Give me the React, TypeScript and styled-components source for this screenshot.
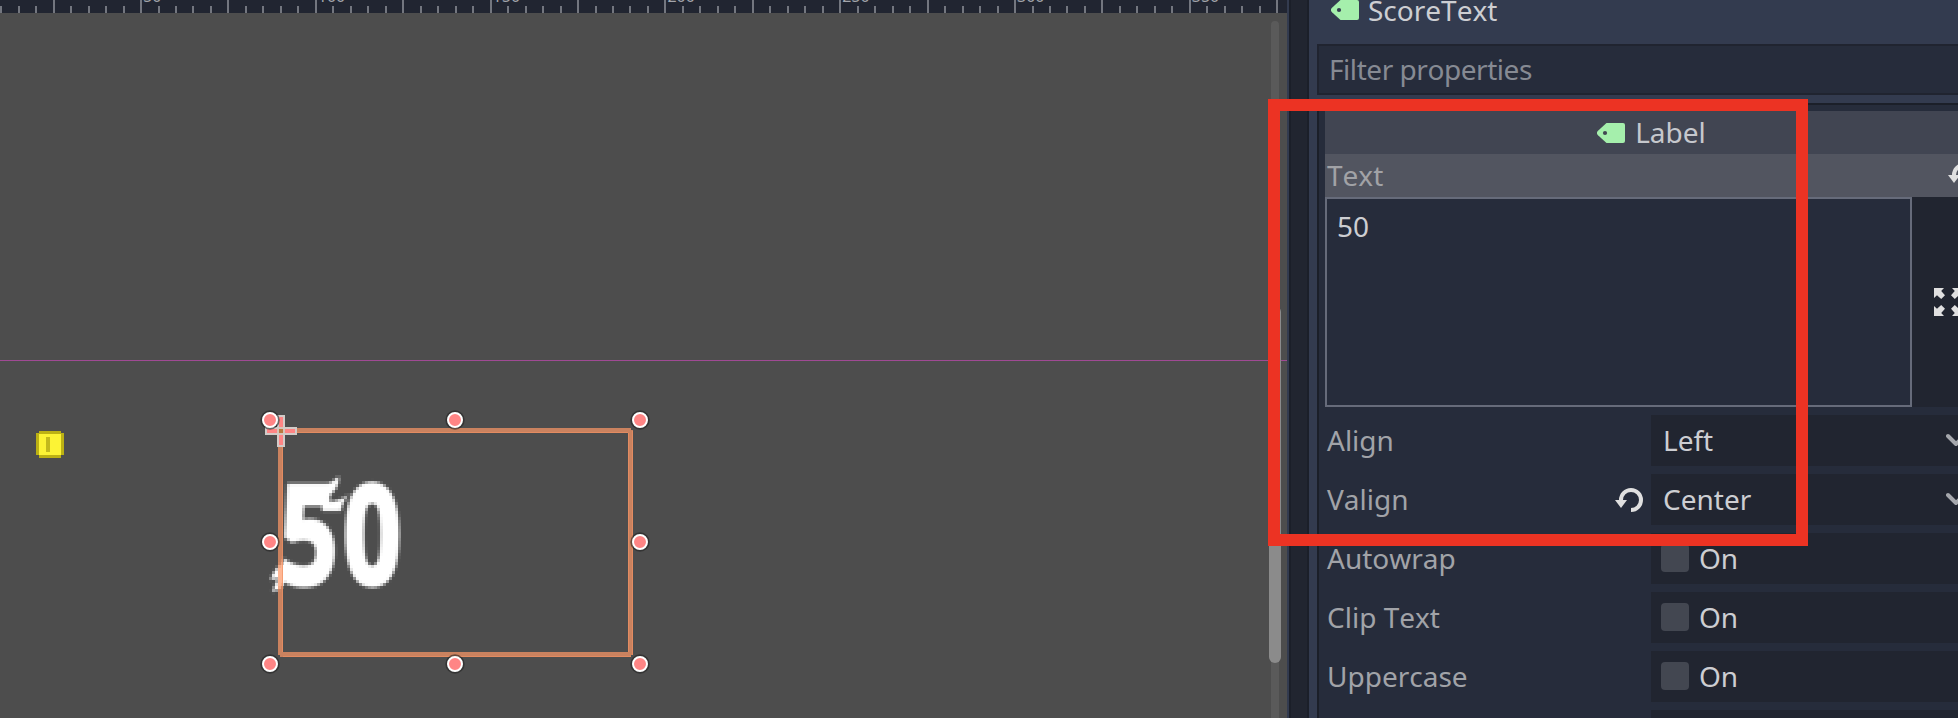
import React from "react";
import styled, { createGlobalStyle } from "styled-components";

const Global = createGlobalStyle`
  *{box-sizing:border-box}
  body{margin:0;background:#4d4d4d;overflow:hidden;font-family:"Noto Sans","Open Sans",sans-serif;font-kerning:none;}
`;
const Editor = styled.div`
  position:relative;display:flex;width:1958px;height:718px;overflow:hidden;
  font-size:28px;line-height:38px;
`;
const Viewport = styled.main`width:1287px;flex:none;display:flex;flex-direction:column;background:#4d4d4d;`;
const RulerBar = styled.div`height:13px;flex:none;background:#212531;overflow:hidden;`;
const Canvas = styled.div`position:relative;flex:1;`;
const Layer = styled.svg`position:absolute;left:0;top:0;display:block;`;
const ScoreLabel = styled.div`
  position:absolute;left:260px;top:447px;width:160px;height:150px;filter:url(#mosaic);
`;
const ScoreGlyphs = styled.div`
  margin-left:20px;padding-top:2px;color:#fff;white-space:nowrap;
  font:bold 136px/140px "Open Sans","Noto Sans",sans-serif;letter-spacing:8px;
  transform-origin:0 0;transform:scaleX(.74);
  -webkit-text-stroke:5px #fff;
`;
const Track = styled.div`
  position:absolute;left:1271px;top:8px;width:8px;height:720px;border-radius:4px;background:#5a5a5a;
`;
const Thumb = styled.div`
  position:absolute;left:-2px;top:285px;width:12px;height:357px;border-radius:6px;background:#8b8b8b;
`;
const Splitter = styled.div`
  width:22px;flex:none;background:#212530;border-left:2px solid #333b4f;
  box-shadow:inset 2px 0 #1b1f29,inset -2px 0 #1b1f29;
`;
const Inspector = styled.aside`width:669px;flex:none;background:#333b4f;padding-left:8px;display:flex;flex-direction:column;`;
const NodeTitle = styled.header`
  height:44px;flex:none;display:flex;gap:9px;padding-left:14px;color:#cdced2;
  & > span{margin-top:-9px;}
`;
const Filter = styled.div`
  height:51px;flex:none;border:2px solid #202430;border-right:0;background:#262c3b;
  color:#868a93;padding:4px 10px;line-height:38px;letter-spacing:-.45px;
`;
const Properties = styled.section`
  flex:1;margin-top:8px;border:solid #1b1f29;border-width:2px 0 0 2px;background:#262c3b;padding:6px 0 0 6px;overflow:hidden;
`;
const ClassHeader = styled.div`
  height:43px;background:#414552;display:flex;justify-content:center;align-items:center;gap:10px;color:#c6c8cd;
  & > span{margin-top:-2px;}
`;
const TextHeader = styled.div`
  height:43px;background:#525560;color:#a1a2a6;display:flex;justify-content:space-between;align-items:center;
  padding:0 2px 2px;
`;
const TextRow = styled.div`height:210px;display:flex;background:#212530;`;
const TextBox = styled.div`
  width:587px;flex:none;border:2px solid #666b7a;background:#262c3b;color:#cdced2;padding:8px 10px;
`;
const ExpandButton = styled.div`flex:1;display:flex;align-items:center;padding-left:22px;overflow:hidden;`;
const Row = styled.div`height:51px;margin-top:8px;display:flex;align-items:center;`;
const Name = styled.div`width:290px;flex:none;padding:0 0 2px 2px;color:#a1a3a8;`;
const ResetSlot = styled.div`width:36px;flex:none;display:flex;`;
const Value = styled.div<{ $check?: boolean }>`
  flex:1;height:51px;background:#212530;color:#cdced2;display:flex;align-items:center;overflow:hidden;
  padding-left:${p => (p.$check ? 10 : 12)}px;gap:10px;
  & > span{margin-top:-2px;}
`;
const Box = styled.i`width:28px;height:28px;border-radius:4px;background:#434751;margin-top:-1px;`;
const Chevron = styled.svg`flex:none;margin:-2px 10px 0 auto;`;
const Highlight = styled.div`
  position:absolute;left:1268px;top:99px;width:540px;height:447px;border:12px solid #ec3323;pointer-events:none;
`;

const Tag = ({ hole = "#333b4f" }: { hole?: string }) => (
  <svg width="28" height="20" viewBox="0 0 28 20">
    <path d="M9.5 0H26a2 2 0 0 1 2 2v16a2 2 0 0 1-2 2H9.5L1 12.2a3 3 0 0 1 0-4.4z" fill="#a5efac" />
    <circle cx="8" cy="10" r="2.1" fill={hole} />
  </svg>
);
const Reset = () => (
  <svg width="28" height="26" viewBox="0 0 28 26">
    <path d="M6 13a10 10 0 1 1 10 10" fill="none" stroke="#e0e0e0" strokeWidth="4" />
    <path d="M0 13h12l-6 8z" fill="#e0e0e0" />
  </svg>
);
const Expand = () => (
  <svg width="28" height="28" viewBox="0 0 28 28" fill="#e0e0e0">
    {[0, 90, 180, 270].map(a => (
      <path key={a} transform={`rotate(${a} 14 14)`} d="M0 0h10L7.2 3 11 7.2 7.2 11 3 7.2 0 10z" />
    ))}
  </svg>
);

const ticks = Array.from({ length: 74 }, (_, i) => i);
const handles = [[270, 420], [455, 420], [640, 420], [270, 542], [640, 542], [270, 664], [455, 664], [640, 664]];

export default function App() {
  return (
    <Editor>
      <Global />
      <Viewport>
        <RulerBar>
          <svg width="1287" height="13" style={{ display: "block" }}>
            {ticks.map(i => {
              const long = i % 5 === 3;
              return <rect key={i} x={Math.round(0.2 + i * 17.48)} y={long ? 0 : 6} width="2" height={long ? 13 : 7} fill="#73767f" />;
            })}
            <g fill="#a3a5ab" fontFamily="Noto Sans" fontSize="16">
              {[50, 100, 150, 200, 250, 300, 350].map((n, i) => (
                <text key={n} x={143 + i * 174.8} y="2">{n}</text>
              ))}
            </g>
          </svg>
        </RulerBar>
        <Canvas>
          <ScoreLabel>
            <ScoreGlyphs>50</ScoreGlyphs>
            <Layer width="160" height="150" viewBox="260 460 160 150" fill="#fff">
              <path d="M312 488q16 -1 27 -12q1 12 -12 22h-15z" />
              <path d="M322 502q16 1 27 -8q-7 8 -8 17h-19z" />
              <path d="M284 562q-8 4 -14 18l8 -2l-6 14q8 -2 12 -8z" />
            </Layer>
          </ScoreLabel>
          <Layer width="1287" height="705" viewBox="0 13 1287 705">
            <defs>
              {/* keeps one sample per 3px cell and spreads it over the cell */}
              <filter id="mosaic" x="0" y="0" width="100%" height="100%" colorInterpolationFilters="sRGB">
                <feGaussianBlur in="SourceGraphic" stdDeviation="0.9" result="soft" />
                <feFlood x="1" y="1" width="1" height="1" floodColor="#000" result="dot" />
                <feOffset in="dot" x="0" y="0" width="3" height="3" result="unit" />
                <feTile in="unit" x="0" y="0" width="160" height="150" result="grid" />
                <feComposite in="soft" in2="grid" operator="in" x="0" y="0" width="160" height="150" />
                <feMorphology operator="dilate" radius="1" />
              </filter>
            </defs>
            <path d="M0 360.5H1287" stroke="#a04a94" />
            <g>
              <path d="M39 431h22v2h3v22h-3v3H39v-3h-3v-22h3z" fill="#bcb114" />
              <rect x="39" y="434" width="22" height="21" fill="#fcf335" />
              <rect x="46" y="437" width="4" height="15" fill="#c2b91c" />
            </g>
            <g stroke="#ff9966" strokeOpacity=".7" strokeWidth="5">
              <path d="M280 430.5H631M280 654.5H631M280.5 430V655M630.5 430V655" />
            </g>
            <path d="M283 432.5H628M282.5 433V652M628.5 433V652M632.5 431V655M283 656.5H631" stroke="#f09162" strokeOpacity=".65" fill="none" />
            <path d="M278 416h6v12h12v6h-12v12h-6v-12h-12v-6h12z" fill="#ff8585" stroke="#d2cbc8" strokeWidth="2" />
            <path d="M278 429v4M284 429v4M279 428h4M279 434h4" stroke="#d8c3b8" strokeWidth="2" />
            <rect x="279" y="429" width="4" height="4" fill="#b9793f" />
            {handles.map(([x, y]) => (
              <g key={`${x}-${y}`}>
                <circle cx={x} cy={y} r="9.7" fill="#252525" fillOpacity=".6" />
                <circle cx={x} cy={y} r="7" fill="#ff8585" stroke="#fff" strokeWidth="2" />
              </g>
            ))}
          </Layer>
          <Track><Thumb /></Track>
        </Canvas>
      </Viewport>
      <Splitter />
      <Inspector>
        <NodeTitle><Tag /><span>ScoreText</span></NodeTitle>
        <Filter>Filter properties</Filter>
        <Properties>
          <ClassHeader><Tag hole="#414552" /><span>Label</span></ClassHeader>
          <TextHeader>Text<Reset /></TextHeader>
          <TextRow><TextBox>50</TextBox><ExpandButton><Expand /></ExpandButton></TextRow>
          {["Align", "Valign"].map((n, i) => (
            <Row key={n}>
              <Name>{n}</Name>
              <ResetSlot>{i === 1 && <Reset />}</ResetSlot>
              <Value>
                <span>{i ? "Center" : "Left"}</span>
                <Chevron width="22" height="14" viewBox="0 0 22 14"><path d="M2 3l8 8 8-8" fill="none" stroke="#a5a7ac" strokeWidth="4" strokeLinecap="round" strokeLinejoin="round" /></Chevron>
              </Value>
            </Row>
          ))}
          {["Autowrap", "Clip Text", "Uppercase"].map(n => (
            <Row key={n}><Name>{n}</Name><ResetSlot /><Value $check><Box /><span>On</span></Value></Row>
          ))}
          <Row><Name /><ResetSlot /><Value /></Row>
        </Properties>
      </Inspector>
      <Highlight />
    </Editor>
  );
}
